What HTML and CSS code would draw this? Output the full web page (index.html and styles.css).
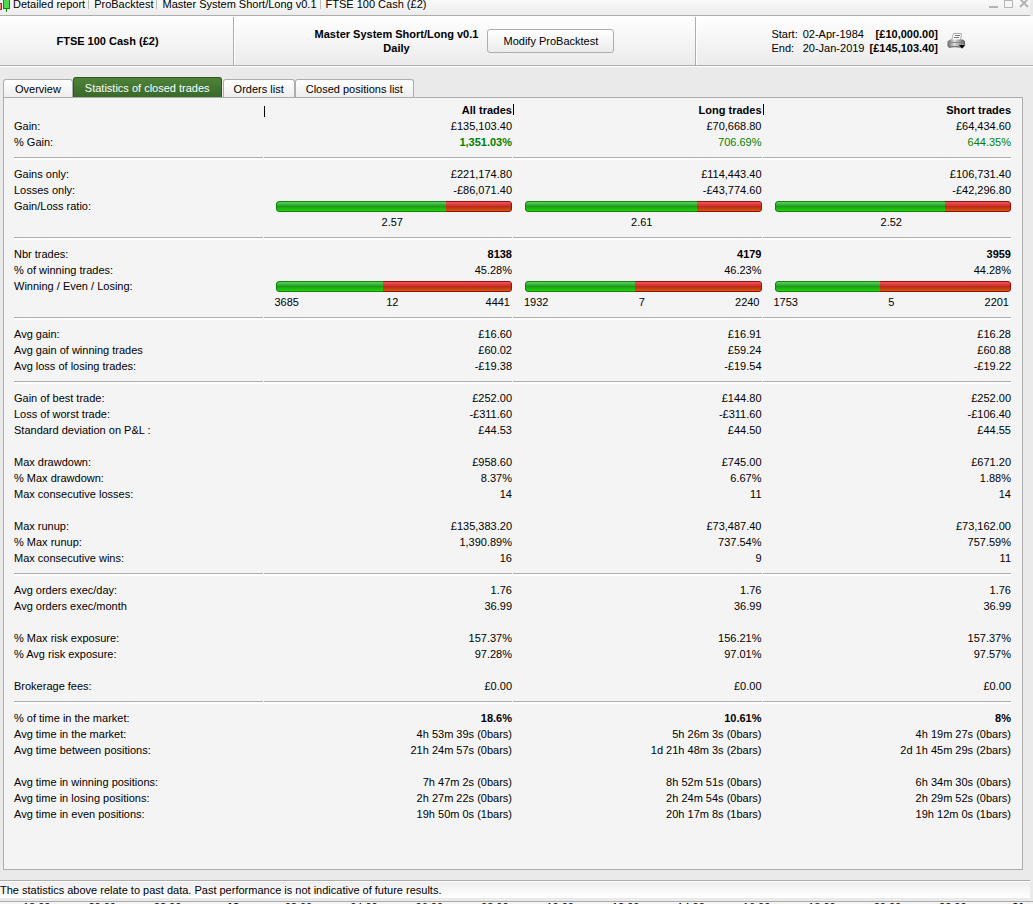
FILE: index.html
```html
<!DOCTYPE html>
<html lang="en">
<head>
    <meta charset="UTF-8">
    <meta name="viewport" content="width=device-width, initial-scale=1.0">
    <title>Detailed report - ProBacktest</title>
    <link rel="stylesheet" href="styles.css">
</head>
<body>
    <header class="titlebar">
        <svg class="candles" width="10" height="14" viewBox="0 0 10 14">
            <rect x="-3" y="3.5" width="4.5" height="6" fill="#e88" stroke="#a22"/>
            <path d="M6.5 0V12" stroke="#0a8a0a"/>
            <rect x="3.5" y="-2" width="6" height="10.5" fill="#4fd84f" stroke="#0a8a0a"/>
        </svg>
        <span class="crumb">Detailed report</span>
        <span class="crumb">ProBacktest</span>
        <span class="crumb">Master System Short/Long v0.1</span>
        <span class="crumb">FTSE 100 Cash (£2)</span>
        <div class="window-buttons">
            <button aria-label="Minimize"><svg width="10" height="10"><path d="M0 7H9" stroke="#b4b4b4" stroke-width="2"/></svg></button>
            <button aria-label="Maximize"><svg width="10" height="10"><path d="M.5 0V7.500H8.500V.5H0" fill="none" stroke="#b4b4b4"/></svg></button>
            <button aria-label="Close"><svg width="10" height="10"><path d="M1 -1L9 7M9 -1L1 7" stroke="#b4b4b4" stroke-width="2"/></svg></button>
        </div>
    </header>

    <section class="summary">
        <div class="instrument">FTSE 100 Cash (£2)</div>
        <div class="system">
            <div class="system-name">Master System Short/Long v0.1<br>Daily</div>
            <button class="modify">Modify ProBacktest</button>
        </div>
        <div class="period">
            <table class="dates">
                <tr><th>Start:</th><td>02-Apr-1984</td><td class="money">[£10,000.00]</td></tr>
                <tr><th>End:</th><td>20-Jan-2019</td><td class="money">[£145,103.40]</td></tr>
            </table>
            <button class="print" aria-label="Print">
                <svg width="19" height="18" viewBox="0 0 19 18">
                    <defs>
                        <linearGradient id="printer">
                            <stop offset="0" stop-color="#666"/>
                            <stop offset="0.4" stop-color="#ddd"/>
                            <stop offset="1" stop-color="#555"/>
                        </linearGradient>
                    </defs>
                    <path d="M6.500 1.500H14.500L13.500 8.500H4.500Z" fill="#fff" stroke="#aaa"/>
                    <path d="M8 3.500H13M7 5.500H12" stroke="#777"/>
                    <path d="M3 7.500H16L18 9.500V13L16 16H2L.5 14V9.500Z" fill="url(#printer)"/>
                    <path d="M1 10.500H17" stroke="#888"/>
                    <path d="M1 14.500H15" stroke="#777"/>
                    <path d="M11 12.500H19L15 17Z" fill="#000" stroke="#fff" stroke-width=".5"/>
                </svg>
            </button>
        </div>
    </section>

    <main>
        <nav class="tabs">
            <button class="tab">Overview</button>
            <button class="tab active">Statistics of closed trades</button>
            <button class="tab">Orders list</button>
            <button class="tab">Closed positions list</button>
        </nav>
        <div class="panel">
            <table class="stats">
                <thead>
                    <tr><th></th><th>All trades</th><th>Long trades</th><th>Short trades</th></tr>
                </thead>
                <tbody id="stats"></tbody>
            </table>
        </div>
    </main>

    <footer class="notice">The statistics above relate to past data. Past performance is not indicative of future results.</footer>
    <div class="axis">
        <span>18:00</span><span>20:00</span><span>22:00</span><b>18</b><span>02:00</span><span>04:00</span><span>06:00</span><span>08:00</span><span>10:00</span><span>12:00</span><span>14:00</span><span>16:00</span><span>18:00</span><span>20:00</span><span>22:00</span><b>21</b>
    </div>
    <script src="stats.js"></script>
</body>
</html>
```
FILE: styles.css
```css
* {
    box-sizing: border-box;
}

body {
    display: flex;
    flex-direction: column;
    height: 100vh;
    margin: 0;
    overflow: hidden;
    background-color: #eaeaea;
    color: #000;
    font: 11px/16px "Liberation Sans", Arial, sans-serif;
}

button {
    padding: 0;
    border: 0;
    background: none;
    color: inherit;
    font: inherit;
}

table {
    border-collapse: collapse;
}

svg {
    display: block;
}

.titlebar {
    display: flex;
    flex: none;
    height: 16px;
    margin-right: 3px;
    border-bottom: 1px solid #adadad;
    background: linear-gradient(#fafafa, #ececec);
    line-height: 9px;
}

.candles {
    margin-right: 3px;
}

.crumb {
    height: 9px;
    white-space: nowrap;
}

.crumb + .crumb {
    margin-left: 3px;
    padding-left: 5px;
    border-left: 1px solid #bbb;
}

.window-buttons {
    display: flex;
    gap: 5px;
    height: 10px;
    margin-left: auto;
    margin-right: 1px;
}

.summary {
    display: grid;
    grid-template-columns: 234fr 462fr 337fr;
    flex: none;
    height: 51px;
    padding-top: 1px;
    border-bottom: 1px solid #fff;
    background: linear-gradient(#fff, #ebebeb);
    box-shadow: inset 0 -1px #adadad;
    line-height: 14px;
}

.summary > div {
    display: flex;
    align-items: center;
    margin-bottom: 1px;
}

.summary > div + div {
    box-shadow: inset 1px 0 #fff;
}

.instrument,
.system {
    border-right: 1px solid #adadad;
}

.instrument {
    justify-content: center;
    padding-right: 18px;
    font-weight: bold;
}

.system {
    justify-content: center;
    gap: 5px;
    padding-right: 4px;
}

.system-name {
    padding: 0 4px;
    font-weight: bold;
    text-align: center;
}

.modify {
    width: 127px;
    height: 24px;
    border: 1px solid #adadad;
    border-radius: 3px;
    background: linear-gradient(#fff, #ececec);
}

.period {
    justify-content: flex-end;
    gap: 9px;
    padding-right: 67px;
}

.dates th,
.dates td {
    padding: 0 0 0 5px;
    font-weight: normal;
    text-align: left;
}

.dates .money {
    font-weight: bold;
    text-align: right;
}

main {
    display: flex;
    flex: 1;
    flex-direction: column;
    padding: 10px 10px 10px 3px;
}

.tabs {
    display: flex;
    align-items: flex-end;
}

.tab {
    height: 18px;
    padding: 0 10px;
    border: 1px solid #adadad;
    border-bottom: 0;
    border-radius: 3px 3px 0 0;
    background: linear-gradient(#fff, #eee);
}

.tab:first-child,
.tab.active {
    padding: 0 11px;
}

.tab.active {
    height: 20px;
    margin-right: 1px;
    border-color: #2d5a1b;
    background: linear-gradient(#4e8239, #39692a);
    color: #fff;
}

.panel {
    flex: 1;
    padding: 4px 10px;
    border: 1px solid #adadad;
    background-color: #f4f4f4;
}

.stats {
    width: 100%;
    table-layout: fixed;
}

.stats tr {
    height: 16px;
}

.stats th,
.stats td {
    padding: 0 1px 0 12px;
    text-align: right;
    white-space: nowrap;
}

.stats tbody th {
    padding-left: 0;
    font-weight: normal;
    text-align: left;
}

/* caret-like column marks in the heading row */
.stats thead th:not(:last-child)::after {
    content: "";
    float: right;
    width: 1px;
    height: 11px;
    margin: 2px -2px 0 0;
    background-color: #000;
}

.stats .rule td {
    padding: 0 1px 0 0;
}

.stats .rule td::after {
    content: "";
    display: block;
    height: 2px;
    border-top: 1px solid #adadad;
    background-color: #fff;
}

.stats .strong td {
    font-weight: bold;
}

.stats .gain td {
    color: #008000;
}

.stats .gain td:nth-child(2) {
    font-weight: bold;
}

.bar {
    display: flex;
    height: 11px;
    margin-top: 1px;
    overflow: hidden;
    border-radius: 3px;
}

.win {
    border: 1px solid #0c870c;
    border-right: 0;
    border-radius: 3px 0 0 3px;
    background: linear-gradient(#5fd05f, #1f9a1f 50%, #18a808 55%, #28d010);
}

.lose {
    flex: 1;
    border: 1px solid #a00a0a;
    border-left: 0;
    border-radius: 0 3px 3px 0;
    background: linear-gradient(#f05a5a, #c82626 50%, #b43408 55%, #d05a14);
}

.split {
    display: grid;
    grid-template-columns: 1fr 1fr 1fr;
    margin: 0 2px 0 -1px;
    text-align: center;
}

.split span:first-child {
    text-align: left;
}

.split span:last-child {
    text-align: right;
}

.notice {
    flex: none;
    height: 18px;
    margin-right: 3px;
    border-top: 1px solid #adadad;
    background: linear-gradient(#ededed, #fff);
    box-shadow: inset 0 1px #fff;
    line-height: 18px;
}

/* time scale of the chart below, mostly out of view */
.axis {
    display: flex;
    flex: none;
    height: 3px;
    margin-top: 3px;
    padding-left: 4px;
    border-top: 1px solid #adadad;
    background-color: #f4f4f4;
    line-height: 10px;
}

.axis > * {
    flex: 0 0 6.36%;
    text-align: center;
}
```
FILE: stats.js
```js
const ROWS = [
    ["Gain:", "£135,103.40", "£70,668.80", "£64,434.60"],
    ["% Gain:", "1,351.03%", "706.69%", "644.35%", "gain"],
    "rule",
    ["Gains only:", "£221,174.80", "£114,443.40", "£106,731.40"],
    ["Losses only:", "-£86,071.40", "-£43,774.60", "-£42,296.80"],
    ["Gain/Loss ratio:", [72], [72.6], [72], "bars"],
    ["", ["", "2.57", ""], ["", "2.61", ""], ["", "2.52", ""], "counts"],
    "rule",
    ["Nbr trades:", "8138", "4179", "3959", "strong"],
    ["% of winning trades:", "45.28%", "46.23%", "44.28%"],
    ["Winning / Even / Losing:", [45.3], [46.4], [44.4], "bars"],
    ["", ["3685", "12", "4441"], ["1932", "7", "2240"], ["1753", "5", "2201"], "counts"],
    "rule",
    ["Avg gain:", "£16.60", "£16.91", "£16.28"],
    ["Avg gain of winning trades", "£60.02", "£59.24", "£60.88"],
    ["Avg loss of losing trades:", "-£19.38", "-£19.54", "-£19.22"],
    "rule",
    ["Gain of best trade:", "£252.00", "£144.80", "£252.00"],
    ["Loss of worst trade:", "-£311.60", "-£311.60", "-£106.40"],
    ["Standard deviation on P&L :", "£44.53", "£44.50", "£44.55"],
    "blank",
    ["Max drawdown:", "£958.60", "£745.00", "£671.20"],
    ["% Max drawdown:", "8.37%", "6.67%", "1.88%"],
    ["Max consecutive losses:", "14", "11", "14"],
    "blank",
    ["Max runup:", "£135,383.20", "£73,487.40", "£73,162.00"],
    ["% Max runup:", "1,390.89%", "737.54%", "757.59%"],
    ["Max consecutive wins:", "16", "9", "11"],
    "rule",
    ["Avg orders exec/day:", "1.76", "1.76", "1.76"],
    ["Avg orders exec/month", "36.99", "36.99", "36.99"],
    "blank",
    ["% Max risk exposure:", "157.37%", "156.21%", "157.37%"],
    ["% Avg risk exposure:", "97.28%", "97.01%", "97.57%"],
    "blank",
    ["Brokerage fees:", "£0.00", "£0.00", "£0.00"],
    "rule",
    ["% of time in the market:", "18.6%", "10.61%", "8%", "strong"],
    ["Avg time in the market:", "4h 53m 39s (0bars)", "5h 26m 3s (0bars)", "4h 19m 27s (0bars)"],
    ["Avg time between positions:", "21h 24m 57s (0bars)", "1d 21h 48m 3s (2bars)", "2d 1h 45m 29s (2bars)"],
    "blank",
    ["Avg time in winning positions:", "7h 47m 2s (0bars)", "8h 52m 51s (0bars)", "6h 34m 30s (0bars)"],
    ["Avg time in losing positions:", "2h 27m 22s (0bars)", "2h 24m 54s (0bars)", "2h 29m 52s (0bars)"],
    ["Avg time in even positions:", "19h 50m 0s (1bars)", "20h 17m 8s (1bars)", "19h 12m 0s (1bars)"],
]

function cell(value, kind) {
    if (kind === "bars") {
        return `<td><div class="bar"><div class="win" style="width: ${value[0]}%"></div><div class="lose"></div></div></td>`
    }
    if (kind === "counts") {
        return `<td><div class="split">${value.map(v => `<span>${v}</span>`).join("")}</div></td>`
    }
    return `<td>${value}</td>`
}

function row(data) {
    if (typeof data === "string") {
        return `<tr class="${data}"><td></td><td></td><td></td><td></td></tr>`
    }
    const [label, all, long, short, kind = ""] = data
    const cells = [all, long, short].map(value => cell(value, kind)).join("")
    return `<tr class="${kind}"><th>${label.replace("&", "&amp;")}</th>${cells}</tr>`
}

document.getElementById("stats").innerHTML = ROWS.map(row).join("")
```
